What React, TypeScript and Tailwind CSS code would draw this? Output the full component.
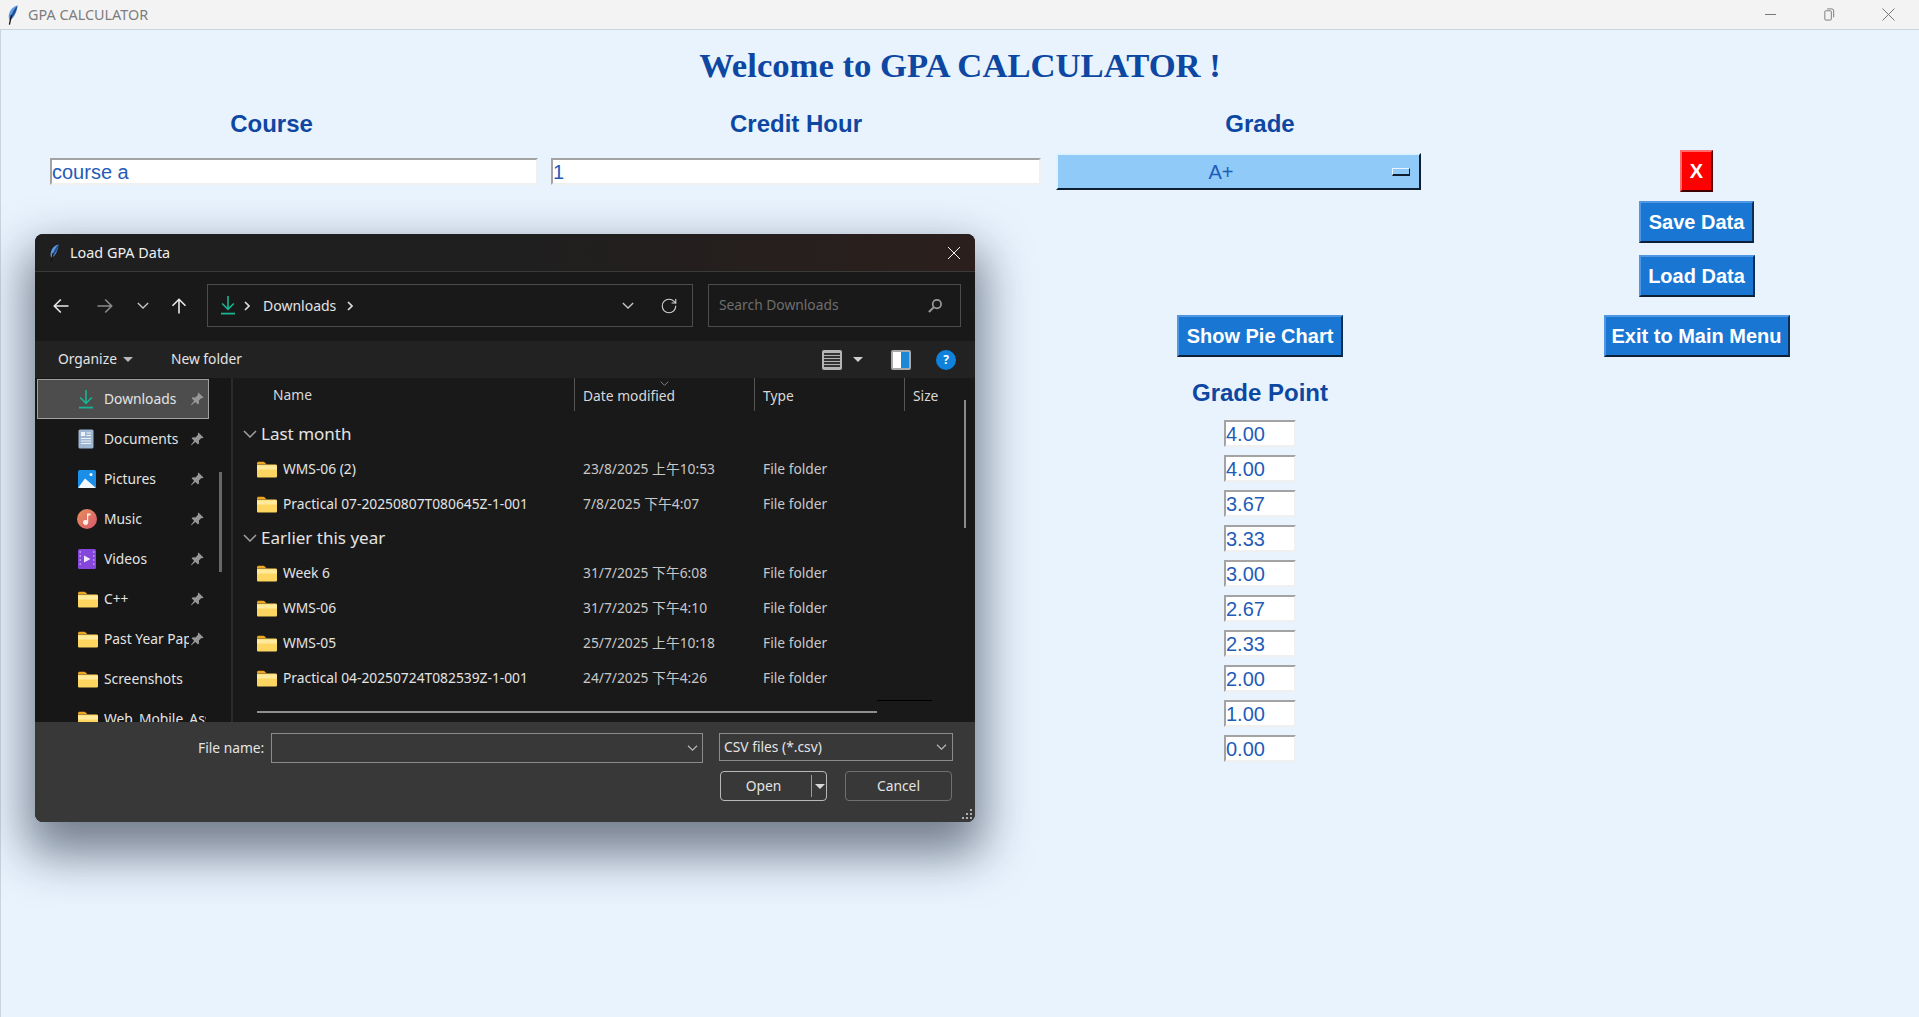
import React from "react";
import { RotateCw } from "lucide-react";

const gradePoints = ["4.00", "4.00", "3.67", "3.33", "3.00", "2.67", "2.33", "2.00", "1.00", "0.00"];

const Feather: React.FC<{ className?: string }> = ({ className }) => (
  <svg viewBox="0 0 12 22" className={className}>
    <path d="M11.500 .5C6 1.500 1.800 7 1.800 13c0 1.700.4 3 1 4C8 14.500 11 7 11.500 .5z" fill="#5b9ae6" />
    <path d="M11.500 .5C8 4 5 9 3.600 15.500c1-.6 2-1.600 3-3C9 9 11 5 11.500 .5z" fill="#234b8a" />
    <path d="M4.800 11 2.600 21.500" stroke="#111111" strokeWidth="1.400" fill="none" />
  </svg>
);

const Folder: React.FC = () => (
  <svg viewBox="0 0 20 17" className="h-[17px] w-[20px] shrink-0">
    <path d="M0 2.500C0 1.400.7.8 1.600.8h4.600c.7 0 1.100.3 1.600.8L9.400 3.200H0z" fill="#eea51f" />
    <path d="M0 3.600h18.600c.8 0 1.400.6 1.400 1.400v10.200c0 .9-.6 1.400-1.400 1.400H1.400C.6 16.600 0 16.100 0 15.200z" fill="#fdd662" />
    <path d="M0 4.600h18.800c.7 0 1.200.4 1.200 1v2.800H0z" fill="#ffe99b" />
  </svg>
);

const DownloadIcon: React.FC = () => (
  <svg viewBox="0 0 16 19" className="h-[19px] w-[16px] shrink-0" fill="none" stroke="#19b493" strokeWidth="1.600">
    <path d="M8 0v13M2.200 7.500 8 13.300l5.800-5.800" />
    <path d="M1 17.600h14" strokeWidth="1.800" />
  </svg>
);

const PinIcon: React.FC = () => (
  <svg viewBox="0 0 15 15" className="ml-[1px] h-[14px] w-[14px] shrink-0">
    <path d="M9 .5 14.500 6l-1.200.7-1-.3L9.500 9.200l.3 2.800-1.300 1.300-2.700-2.700L1.500 14.300 1 13.800l3.400-4.300-2.700-2.700L3 5.500l2.800.3 2.800-2.800-.3-1z" fill="#979797" />
  </svg>
);

const Chevron: React.FC<{ className?: string; color?: string }> = ({ className = "", color = "#b8b8b8" }) => (
  <svg viewBox="0 0 14 8" className={`shrink-0 ${className}`} fill="none" stroke={color} strokeWidth="1.500">
    <path d="M1 1l6 6 6-6" />
  </svg>
);

const Arrow: React.FC<{ className?: string }> = ({ className = "" }) => (
  <svg viewBox="0 0 16 16" className={`h-[16px] w-[16px] shrink-0 ${className}`} fill="none" stroke="currentColor" strokeWidth="1.600">
    <path d="M15.500 8H1.500M7.800 1.500 1.300 8l6.500 6.500" />
  </svg>
);

const Crumb: React.FC<{ className?: string }> = ({ className = "" }) => (
  <svg viewBox="0 0 6 10" className={`h-[10px] w-[6px] shrink-0 ${className}`} fill="none" stroke="#dcdcdc" strokeWidth="1.700">
    <path d="M1 1l4 4-4 4" />
  </svg>
);

const DocumentsIcon: React.FC = () => (
  <svg viewBox="0 0 16 20" className="h-[20px] w-[16px]">
    <rect x="0.500" y="0.500" width="15" height="19" rx="1.500" fill="#9db6d2" />
    <rect x="3" y="3" width="4" height="4" fill="#eef3f8" />
    <path d="M8.500 4h4.500M8.500 6.500h4.500M3 9.500h10M3 12h10M3 14.500h10" stroke="#eef3f8" strokeWidth="1.200" />
  </svg>
);

const PicturesIcon: React.FC = () => (
  <svg viewBox="0 0 18 18" className="h-[18px] w-[18px]">
    <rect width="18" height="18" rx="1.500" fill="#1b8fe8" />
    <circle cx="13" cy="4.500" r="1.500" fill="#ffffff" />
    <path d="M0 18 7 8.500 18 18z" fill="#f3f8fc" />
  </svg>
);

const MusicIcon: React.FC = () => (
  <svg viewBox="0 0 20 20" className="-ml-[1px] h-[20px] w-[20px]">
    <defs>
      <linearGradient id="music-grad" x1="0" y1="0" x2="1" y2="1">
        <stop offset="0" stopColor="#e8915a" />
        <stop offset="1" stopColor="#d8566f" />
      </linearGradient>
    </defs>
    <circle cx="10" cy="10" r="10" fill="url(#music-grad)" />
    <path d="M10 4.500h3.500v2H11.200v7a2.600 2.600 0 1 1-1.200-2.200z" fill="#fbeee6" />
  </svg>
);

const VideosIcon: React.FC = () => (
  <svg viewBox="0 0 18 20" className="h-[20px] w-[18px]">
    <rect width="18" height="20" rx="1.500" fill="#8646dc" />
    <path d="M6 6.500 12.500 10 6 13.500z" fill="#f1e9fb" />
    <path d="M1.500 3h1.500M1.500 7h1.500M1.500 11h1.500M1.500 15h1.500M15 3h1.500M15 7h1.500M15 11h1.500M15 15h1.500" stroke="#c9a8f2" strokeWidth="1.600" />
  </svg>
);

const sidebarItems: { label: string; icon: React.ReactNode; pinned: boolean; selected?: boolean }[] = [
  { label: "Downloads", icon: <DownloadIcon />, pinned: true, selected: true },
  { label: "Documents", icon: <DocumentsIcon />, pinned: true },
  { label: "Pictures", icon: <PicturesIcon />, pinned: true },
  { label: "Music", icon: <MusicIcon />, pinned: true },
  { label: "Videos", icon: <VideosIcon />, pinned: true },
  { label: "C++", icon: <Folder />, pinned: true },
  { label: "Past Year Papers", icon: <Folder />, pinned: true },
  { label: "Screenshots", icon: <Folder />, pinned: false },
  { label: "Web_Mobile_Assignment", icon: <Folder />, pinned: false },
];

const FileRow: React.FC<{ name: string; date: string }> = ({ name, date }) => (
  <div className="flex h-[35px] items-center pt-[2px] text-[13.8px] text-[#e4e4e4]">
    <div className="flex w-[341px] items-center gap-[6px] pl-[24px]">
      <Folder />
      <span className="whitespace-nowrap">{name}</span>
    </div>
    <div className="w-[180px] whitespace-nowrap pl-[9px] text-[#c8c8c8]">{date}</div>
    <div className="pl-[9px] text-[#c8c8c8]">File folder</div>
  </div>
);

const GroupRow: React.FC<{ label: string; className: string }> = ({ label, className }) => (
  <div className={`flex items-center pl-[10px] text-[17px] text-[#e4e4e4] ${className}`}>
    <Chevron className="mr-[4px] h-[8px] w-[14px]" color="#a0a0a0" />
    {label}
  </div>
);

const LoadDialog: React.FC = () => (
  <div className="absolute left-[34px] top-[204px] flex h-[588px] w-[940px] flex-col overflow-hidden rounded-[8px] bg-[#191919] font-['Noto_Sans','Noto_Sans_CJK_TC',sans-serif] shadow-[0_24px_48px_8px_rgba(20,30,50,0.55)]">
    <div className="flex h-[38px] items-center border-b border-[#3a3a3a] bg-gradient-to-r from-[#1f1f1f] via-[#1f1f1f] to-[#2b1f1d] pl-[14px] pr-[15px] text-[14.4px] text-[#f0f0f0]">
      <Feather className="h-[18px] w-[10px]" />
      <span className="ml-[11px]">Load GPA Data</span>
      <svg viewBox="0 0 12 12" className="ml-auto h-[12px] w-[12px]" stroke="#f2f2f2" strokeWidth="1" fill="none">
        <path d="M0 0l12 12M12 0 0 12" />
      </svg>
    </div>

    <div className="flex h-[69px] items-center bg-[#191919] pb-[2px] pl-[18px]">
      <Arrow className="text-[#e8e8e8]" />
      <Arrow className="ml-[28px] rotate-180 text-[#8a8a8a]" />
      <Chevron className="ml-[24px] h-[7px] w-[12px]" color="#c8c8c8" />
      <Arrow className="ml-[22px] rotate-90 text-[#e8e8e8]" />
      <div className="ml-[20px] flex h-[43px] w-[486px] items-center border border-[#4c4c4c] pl-[12px] text-[14px] text-[#e4e4e4]">
        <DownloadIcon />
        <Crumb className="ml-[8px]" />
        <span className="ml-[13px]">Downloads</span>
        <Crumb className="ml-[11px]" />
        <Chevron className="ml-[269px] h-[7px] w-[12px]" color="#c8c8c8" />
        <RotateCw size={18} strokeWidth={1.500} className="ml-[26px] text-[#d0d0d0]" />
      </div>
      <div className="ml-[15px] flex h-[43px] w-[253px] items-center border border-[#4c4c4c] pl-[10px] text-[13.8px] text-[#6e6e6e]">
        Search Downloads
        <svg viewBox="0 0 16 16" className="ml-auto mr-[17px] h-[15px] w-[15px] -scale-x-100" fill="none" stroke="#9a9a9a" strokeWidth="1.800">
          <circle cx="6.500" cy="6.500" r="4.500" />
          <path d="m10 10 5 5" strokeWidth="2.200" />
        </svg>
      </div>
    </div>

    <div className="flex h-[37px] items-center bg-[#222222] text-[13.8px] text-[#e4e4e4]">
      <span className="ml-[23px]">Organize</span>
      <span className="ml-[6px] h-0 w-0 border-x-[5px] border-t-[5px] border-x-transparent border-t-[#b8b8b8]" />
      <span className="ml-[38px]">New folder</span>
      <div className="ml-auto mr-[19px] flex items-center">
        <div className="flex h-[20px] w-[20px] flex-col justify-center gap-[1px] rounded-[2px] bg-[#b4b4b4] px-[2px]">
          <div className="h-[2px] bg-[#333333]" />
          <div className="h-[2px] bg-[#333333]" />
          <div className="h-[2px] bg-[#333333]" />
          <div className="h-[2px] bg-[#333333]" />
          <div className="h-[2px] bg-[#333333]" />
        </div>
        <span className="ml-[11px] h-0 w-0 border-x-[5px] border-t-[5px] border-x-transparent border-t-[#d0d0d0]" />
        <div className="ml-[28px] flex h-[20px] w-[20px] rounded-[2px] border-[2px] border-[#a8a8a8] bg-white">
          <div className="ml-auto h-full w-[8px] bg-[#1e88d8]" />
        </div>
        <div className="ml-[25px] flex h-[20px] w-[20px] items-center justify-center rounded-full bg-[#0f82dc] text-[12px] font-bold text-white">
          ?
        </div>
      </div>
    </div>

    <div className="flex min-h-0 flex-1">
      <div className="relative w-[198px] shrink-0 overflow-hidden border-r-[2px] border-[#2a2a2a] bg-[#171717] pl-[2px] pt-[1px]">
        {sidebarItems.map((item) => (
          <div
            key={item.label}
            className={`flex h-[40px] w-[172px] items-center text-[13.8px] text-[#e4e4e4] ${
              item.selected ? "border border-[#a0a0a0] bg-[#4d4d4d] pl-[40px]" : "pl-[41px]"
            }`}
          >
            <div className="w-[26px] shrink-0">{item.icon}</div>
            <span className={`shrink-0 overflow-hidden whitespace-nowrap ${item.pinned ? "w-[85px]" : "w-[102px]"}`}>
              {item.label}
            </span>
            {item.pinned && <PinIcon />}
          </div>
        ))}
        <div className="absolute left-[184px] top-[94px] h-[100px] w-[3px] bg-[#686868]" />
      </div>

      <div className="relative flex-1 overflow-hidden">
        <div className="flex h-[33px] items-center text-[13.8px] text-[#d8d8d8]">
          <div className="w-[341px] pl-[40px] pt-[2px]">Name</div>
          <div className="h-full w-[180px] border-l border-[#555555] pl-[8px] leading-[35px]">Date modified</div>
          <div className="h-full w-[150px] border-l border-[#555555] pl-[8px] leading-[35px]">Type</div>
          <div className="h-full border-l border-[#555555] pl-[8px] leading-[35px]">Size</div>
        </div>
        <Chevron className="absolute left-[427px] top-[3px] h-[5px] w-[9px]" color="#8a8a8a" />
        <div className="pt-[5px]">
          <GroupRow label="Last month" className="h-[35px]" />
          <FileRow name="WMS-06 (2)" date="23/8/2025 上午10:53" />
          <FileRow name="Practical 07-20250807T080645Z-1-001" date="7/8/2025 下午4:07" />
          <GroupRow label="Earlier this year" className="h-[34px]" />
          <FileRow name="Week 6" date="31/7/2025 下午6:08" />
          <FileRow name="WMS-06" date="31/7/2025 下午4:10" />
          <FileRow name="WMS-05" date="25/7/2025 上午10:18" />
          <FileRow name="Practical 04-20250724T082539Z-1-001" date="24/7/2025 下午4:26" />
        </div>
        <div className="absolute left-[24px] top-[333px] h-[2px] w-[620px] bg-[#8f8f8f]" />
        <div className="absolute left-[644px] top-[322px] h-[1px] w-[55px] bg-black" />
        <div className="absolute left-[731px] top-[22px] h-[128px] w-[2px] bg-[#8a8a8a]" />
      </div>
    </div>

    <div className="relative h-[100px] shrink-0 bg-[#383838] text-[13.8px] text-[#e4e4e4]">
      <div className="flex items-start pl-[163px] pt-[11px]">
        <span className="w-[66px] whitespace-nowrap leading-[30px]">File name:</span>
        <div className="ml-[7px] flex h-[30px] w-[432px] items-center justify-end border border-[#8c8c8c] pr-[4px]">
          <Chevron className="h-[6px] w-[11px]" />
        </div>
        <div className="ml-[16px] flex h-[28px] w-[234px] items-center justify-between border border-[#8c8c8c] pl-[4px] pr-[5px]">
          CSV files (*.csv)
          <Chevron className="h-[6px] w-[11px]" />
        </div>
      </div>
      <div className="ml-[685px] mt-[8px] flex">
        <div className="flex h-[30px] w-[107px] items-center rounded-[4px] border border-[#b8b8b8]">
          <span className="w-[90px] pr-[5px] text-center">Open</span>
          <div className="h-[22px] w-px bg-[#9a9a9a]" />
          <span className="ml-[3px] h-0 w-0 border-x-[5px] border-t-[5px] border-x-transparent border-t-[#d8d8d8]" />
        </div>
        <div className="ml-[18px] flex h-[30px] w-[107px] items-center justify-center rounded-[4px] border border-[#707070]">
          Cancel
        </div>
      </div>
      <svg viewBox="0 0 12 12" className="absolute bottom-[1px] right-[1px] h-[12px] w-[12px]" fill="#b0b0b0">
        <rect x="8" y="0" width="2" height="2" />
        <rect x="4" y="4" width="2" height="2" />
        <rect x="8" y="4" width="2" height="2" />
        <rect x="0" y="8" width="2" height="2" />
        <rect x="4" y="8" width="2" height="2" />
        <rect x="8" y="8" width="2" height="2" />
      </svg>
    </div>
  </div>
);

const ActionButton: React.FC<{ label: string; className?: string }> = ({ label, className = "" }) => (
  <button
    type="button"
    className={`block h-[42px] border-2 text-[20px] font-bold text-white ${className}`}
  >
    {label}
  </button>
);

const blueButton = "border-t-[#4f97e3] border-l-[#4f97e3] border-r-[#0c2f55] border-b-[#0b2036] bg-[#1976d2]";

const Entry: React.FC<{ value: string; className: string }> = ({ value, className }) => (
  <div
    className={`border-2 border-t-[#a3a3a3] border-l-[#a3a3a3] border-r-[#f0f0f0] border-b-[#f0f0f0] bg-white text-[20px] leading-[24px] text-[#1f5cb8] ${className}`}
  >
    {value}
  </div>
);

export default function App() {
  return (
    <div className="flex h-screen w-full flex-col overflow-hidden bg-[#e8f3fe] font-['Liberation_Sans',sans-serif]">
      <div className="flex h-[30px] shrink-0 items-center border-b border-[#c9d4df] bg-[#f3f3f3] pl-[7px] font-['Noto_Sans',sans-serif] text-[14.4px] text-[#7d7d7d]">
        <Feather className="h-[20px] w-[11px]" />
        <span className="ml-[10px]">GPA CALCULATOR</span>
        <div className="ml-auto flex items-center">
          <div className="h-px w-[11px] bg-[#777777]" />
          <svg viewBox="0 0 12 14" className="ml-[47px] h-[13px] w-[12px]" fill="none" stroke="#777777">
            <rect x="1.500" y="3" width="7" height="10" rx="1" />
            <path d="M4 1h5a2 2 0 0 1 2 2v7" />
          </svg>
          <svg viewBox="0 0 13 13" className="ml-[47px] mr-[24px] h-[13px] w-[13px]" fill="none" stroke="#777777">
            <path d="M.5.5l12 12M12.500.5l-12 12" />
          </svg>
        </div>
      </div>

      <div className="relative flex-1 border-l border-[#c9d4df]">
        <h1 className="pt-[17px] text-center font-['Liberation_Serif',serif] text-[34.67px] leading-[37px] font-bold text-[#0d47a1]">
          Welcome to GPA CALCULATOR !
        </h1>

        <div className="flex pl-[49px] pt-[26px]">
          <div className="w-[488px]">
            <div className="pr-[45px] text-center text-[24px] leading-[28px] font-bold text-[#0d47a1]">Course</div>
            <Entry value="course a" className="mt-[20px] h-[27px] w-[488px]" />
          </div>

          <div className="ml-[13px] w-[490px]">
            <div className="text-center text-[24px] leading-[28px] font-bold text-[#0d47a1]">Credit Hour</div>
            <Entry value="1" className="mt-[20px] h-[27px] w-[490px]" />
          </div>

          <div className="ml-[15px] flex w-[408px] flex-col">
            <div className="text-center text-[24px] leading-[28px] font-bold text-[#0d47a1]">Grade</div>
            <div className="mt-[15px] flex h-[37px] w-[365px] items-center border-2 border-t-[#dff2fe] border-l-[#dff2fe] border-r-[#0f1f30] border-b-[#0f1f30] bg-[#90caf9] text-[#1f5cb8]">
              <span className="w-[334px] pr-[8px] text-center text-[20px] leading-none">A+</span>
              <div className="h-[8px] w-[18px] border border-b-2 border-t-[#e6f5ff] border-l-[#e6f5ff] border-r-[#0f1f30] border-b-[#0f1f30] bg-[#90caf9]" />
            </div>
            <ActionButton label="Show Pie Chart" className={`mt-[125px] w-[166px] self-center ${blueButton}`} />
            <div className="mt-[22px] text-center text-[24px] leading-[28px] font-bold text-[#0d47a1]">Grade Point</div>
            <div className="mt-[13px] flex flex-col items-center gap-[8px]">
              {gradePoints.map((p, i) => (
                <Entry key={i} value={p} className="h-[27px] w-[72px]" />
              ))}
            </div>
          </div>

          <div className="flex flex-1 flex-col items-center pl-[10px] pt-[40px]">
            <ActionButton label="X" className="w-[33px] border-t-[#ff6a6a] border-l-[#ff6a6a] border-r-[#5a0000] border-b-[#400000] bg-[#ff0000]" />
            <ActionButton label="Save Data" className={`mt-[9px] w-[115px] ${blueButton}`} />
            <ActionButton label="Load Data" className={`mt-[12px] w-[116px] ${blueButton}`} />
            <ActionButton label="Exit to Main Menu" className={`mt-[18px] w-[186px] ${blueButton}`} />
          </div>
        </div>

        <LoadDialog />
      </div>
    </div>
  );
}
